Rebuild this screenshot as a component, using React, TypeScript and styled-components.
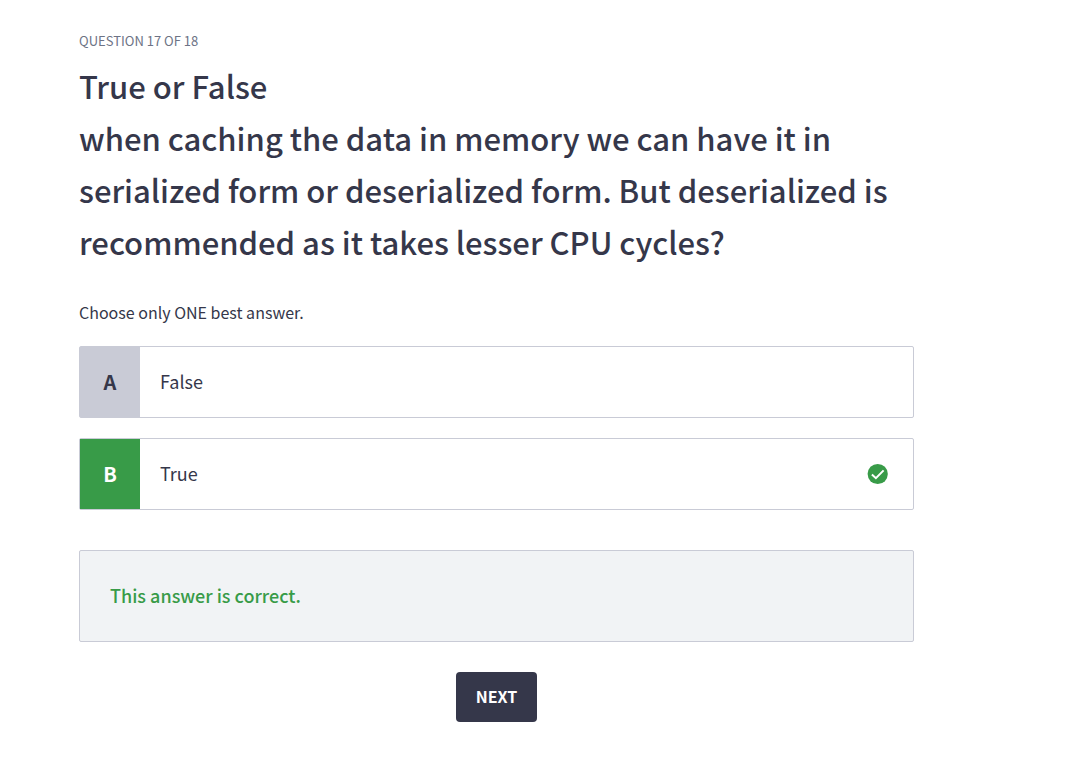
import React, { useState } from "react";
import styled, { createGlobalStyle } from "styled-components";

const GlobalStyle = createGlobalStyle`
  *, *::before, *::after {
    box-sizing: border-box;
  }
  body {
    margin: 0;
    background: #ffffff;
    color: #35374a;
    font-family: "Noto Sans CJK SC", "Noto Sans", sans-serif;
  }
`;

const Page = styled.main`
  padding: 30px 157px 40px 79px;
`;

const Progress = styled.p`
  margin: 0;
  color: #6d7385;
  font-size: 13px;
  line-height: 22px;
  text-transform: uppercase;
`;

const Title = styled.h1`
  margin: 8px 0 0;
  font-size: 31px;
  font-weight: 500;
  line-height: 52px;
`;

const Choices = styled.fieldset`
  display: flex;
  flex-direction: column;
  gap: 20px;
  min-width: 0;
  margin: 32px 0 0;
  padding: 0;
  border: 0;
`;

const Instruction = styled.legend`
  padding: 0;
  margin-bottom: 22px;
  font-size: 16px;
  line-height: 24px;
`;

const Choice = styled.label`
  position: relative;
  display: flex;
  align-items: center;
  height: 72px;
  border: 1px solid #c9cbd6;
  border-radius: 2px;
  cursor: pointer;
`;

const Radio = styled.input`
  position: absolute;
  inset: 0;
  width: 100%;
  height: 100%;
  margin: 0;
  opacity: 0;
  cursor: pointer;
`;

const Letter = styled.span<{ $correct: boolean }>`
  display: flex;
  align-items: center;
  justify-content: center;
  align-self: stretch;
  flex: none;
  width: 60px;
  padding-bottom: 2px;
  background: ${(p) => (p.$correct ? "#389b48" : "#c9cbd6")};
  color: ${(p) => (p.$correct ? "#ffffff" : "#35374a")};
  font-size: 20px;
  font-weight: 700;
`;

const ChoiceText = styled.span`
  flex: 1;
  padding: 0 20px 2px;
  font-size: 18px;
  line-height: 30px;
`;

const CheckMark = styled.svg`
  flex: none;
  width: 22px;
  height: 22px;
  margin-right: 24px;
`;

const Feedback = styled.div`
  margin-top: 40px;
  padding: 30px 30px 32px;
  border: 1px solid #c9cbd6;
  border-radius: 2px;
  background: #f1f3f5;
  color: #389b48;
  font-size: 18px;
  font-weight: 500;
  line-height: 28px;
`;

const Actions = styled.div`
  display: flex;
  justify-content: center;
  margin-top: 30px;
`;

const NextButton = styled.button`
  height: 50px;
  padding: 0 20px 2px;
  border: 0;
  border-radius: 4px;
  background: #35374a;
  color: #ffffff;
  font-family: inherit;
  font-size: 16px;
  font-weight: 700;
  text-transform: uppercase;
  cursor: pointer;
`;

const answers = [
  { letter: "A", text: "False", correct: false },
  { letter: "B", text: "True", correct: true },
];

export default function App() {
  const [selected, setSelected] = useState("B");

  return (
    <>
      <GlobalStyle />
      <Page>
        <Progress>Question 17 of 18</Progress>
        <Title>
          True or False
          <br />
          when caching the data in memory we can have it in serialized form or
          deserialized form. But deserialized is recommended as it takes lesser
          CPU cycles?
        </Title>
        <Choices>
          <Instruction>Choose only ONE best answer.</Instruction>
          {answers.map(({ letter, text, correct }) => (
            <Choice key={letter}>
              <Radio
                type="radio"
                name="answer"
                value={letter}
                checked={selected === letter}
                onChange={() => setSelected(letter)}
              />
              <Letter $correct={correct}>{letter}</Letter>
              <ChoiceText>{text}</ChoiceText>
              {correct && (
                <CheckMark viewBox="0 0 22 22" aria-hidden="true">
                  <circle cx="10.7" cy="11" r="10.1" fill="#389b48" />
                  <path
                    d="M4.9 11.4 8.9 15.2 16.6 7.4"
                    fill="none"
                    stroke="#ffffff"
                    strokeWidth="2"
                  />
                </CheckMark>
              )}
            </Choice>
          ))}
        </Choices>
        <Feedback role="status">This answer is correct.</Feedback>
        <Actions>
          <NextButton type="button">Next</NextButton>
        </Actions>
      </Page>
    </>
  );
}
